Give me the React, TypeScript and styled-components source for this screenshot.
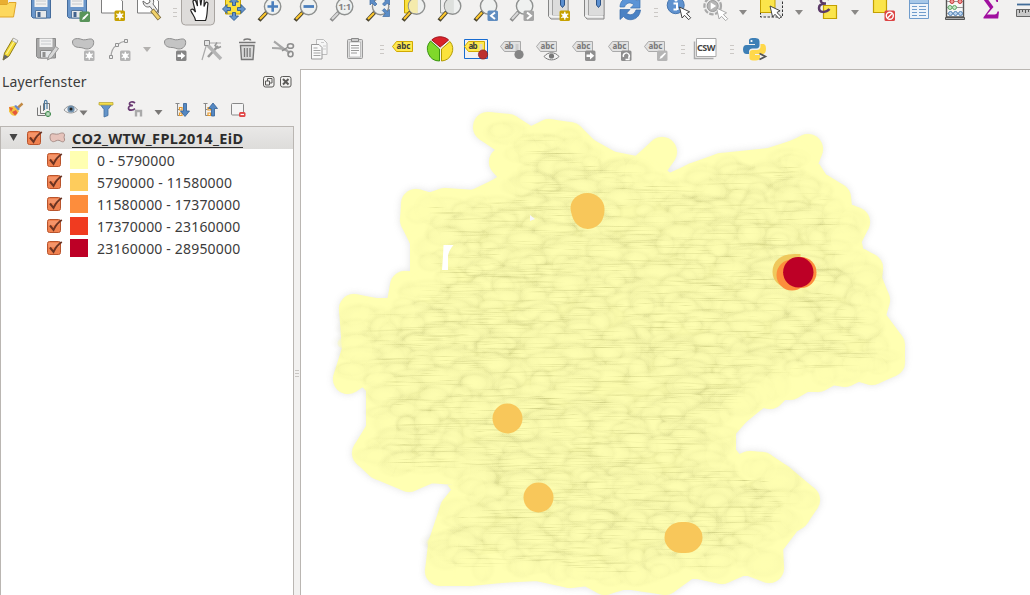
import React from "react";
import styled, { createGlobalStyle } from "styled-components";

const GlobalStyle = createGlobalStyle`
  html, body, #root { margin: 0; height: 100%; }
  body { background: #f2f1f0; overflow: hidden; font-family: "Noto Sans", "Open Sans", sans-serif; color: #3c3c3c; }
`;

const Window = styled.div`
  display: flex;
  flex-direction: column;
  width: 1030px;
  height: 595px;
  overflow: hidden;
  background: #f2f1f0;
`;

const Toolbar = styled.div<{ $height: number; $shift: number }>`
  display: flex;
  align-items: flex-end;
  flex: none;
  height: ${(p) => p.$height}px;
  margin-left: ${(p) => p.$shift}px;
  overflow: hidden;
`;

const ToolSvg = styled.svg`
  flex: none;
  width: 36px;
  height: 32px;
  display: block;
`;

const GripBox = styled.div`
  flex: none;
  width: 13px;
  height: 32px;
  display: flex;
  flex-direction: column;
  align-items: center;
  justify-content: center;
  gap: 3px;
`;

const GripDot = styled.span`
  width: 4px;
  height: 1px;
  margin-left: 3px;
  background: #cbc8c5;
`;

const ArrowBox = styled.div<{ $width: number }>`
  flex: none;
  width: ${(p) => p.$width}px;
  height: 32px;
  display: flex;
  align-items: center;
  justify-content: center;
`;

const Triangle = styled.span<{ $color: string }>`
  border: 4px solid transparent;
  border-top: 5px solid ${(p) => p.$color};
  border-bottom: 0;
`;

const Workspace = styled.div`
  display: flex;
  flex: 1;
  min-height: 0;
  margin-top: 4px;
`;

const Panel = styled.aside`
  width: 294px;
  display: flex;
  flex-direction: column;
`;

const PanelTitle = styled.header`
  display: flex;
  align-items: center;
  height: 25px;
  gap: 5px;
  padding: 0 2px;
  font-size: 14px;
  > span { flex: 1; letter-spacing: 0.15px; }
`;

const PanelTools = styled.div`
  display: flex;
  align-items: center;
  height: 32px;
  > svg { flex: none; display: block; }
`;

const Tree = styled.div`
  flex: 1;
  background: #fff;
  border: 1px solid #bab6b2;
  border-bottom: 0;
`;

const GroupRow = styled.div`
  display: flex;
  align-items: center;
  height: 22px;
  padding-left: 8px;
  background: linear-gradient(#e9e8e7, #dddcda);
  > svg { flex: none; }
`;

const GroupName = styled.span`
  margin: 2px 0 0 6px;
  font-size: 14.5px;
  line-height: 17px;
  font-weight: 700;
  letter-spacing: 0.37px;
  color: #2c2c2c;
  white-space: nowrap;
  border-bottom: 1px solid #2c2c2c;
`;

const ClassRow = styled.div`
  display: flex;
  align-items: center;
  height: 22px;
  padding-left: 45px;
  > svg { flex: none; }
`;

const Swatch = styled.span<{ $color: string }>`
  width: 18px;
  height: 18px;
  margin: 0 9px 0 7px;
  background: ${(p) => p.$color};
`;

const ClassLabel = styled.span`
  margin-top: 2px;
  font-size: 14px;
  line-height: 20px;
  letter-spacing: 0.18px;
  white-space: nowrap;
`;

const Splitter = styled.div`
  width: 6px;
  display: flex;
  flex-direction: column;
  align-items: center;
  justify-content: center;
  gap: 2px;
  padding-top: 82px;
  box-sizing: border-box;
  > i { width: 4px; height: 1px; background: #c9c6c3; }
`;

const MapFrame = styled.main`
  flex: 1;
  background: #fff;
  border-left: 1px solid #bab6b2;
  border-top: 1px solid #bab6b2;
  > svg { display: block; }
`;

type Kids = { children?: React.ReactNode };

const Tool = ({ children }: Kids) => <ToolSvg viewBox="0 0 36 32">{children}</ToolSvg>;

const Grip = () => (
  <GripBox>
    <GripDot />
    <GripDot />
    <GripDot />
  </GripBox>
);

const Drop = ({ width = 20, color = "#8a8886" }: { width?: number; color?: string }) => (
  <ArrowBox $width={width}>
    <Triangle $color={color} />
  </ArrowBox>
);

const Badge = ({ x, y, fill, children }: { x: number; y: number; fill: string } & Kids) => (
  <g transform={`translate(${x} ${y})`}>
    <rect x=".5" y=".5" width="10.5" height="10.5" rx="1.5" fill={fill} />
    {children}
  </g>
);

const Star = () => (
  <g stroke="#fff" strokeWidth="1.3">
    <path d="M5.8 1.8v8M2.3 3.8l7 4M9.3 3.8l-7 4" />
    <circle cx="5.8" cy="5.8" r="1.8" fill="#fff" />
  </g>
);

const ArrowRight = () => <path d="M2 4.6h3.5V2.2L9.8 5.8 5.5 9.4V7H2z" fill="#fff" />;

const Lens = ({ grey, y = 10.5, children }: { grey?: boolean; y?: number } & Kids) => (
  <g>
    <path d={`M7 24.5L15 ${y + 5.5}`} stroke={grey ? "#8d8d8d" : "#4b4632"} strokeWidth="4" />
    <path d={`M8 23L14 ${y + 6.5}`} stroke={grey ? "#d7d7d7" : "#ffc92e"} strokeWidth="2" />
    <circle cx="20.6" cy={y} r="8.2" fill="#eef1f0" fillOpacity=".85" stroke="#8f9190" strokeWidth="1.4" />
    {children}
  </g>
);

const Floppy = ({ grey, y = 0 }: { grey?: boolean; y?: number }) => (
  <g transform={`translate(0 ${y})`}>
    <path d="M8.5 2.5h19v19.5H10l-1.500-1.500z" fill={grey ? "#a8a8a8" : "#6b97cb"} stroke={grey ? "#8a8a8a" : "#456c9c"} />
    <path d="M11.500 2.500h13v8.500h-13z" fill="#f1f1f1" />
    <path d="M13 5h10M13 8h10" stroke="#c6c9cc" />
    <path d="M12.500 14.500h11V22h-11z" fill="#e6e8ea" stroke={grey ? "#8a8a8a" : "#56789f"} />
    <path d="M14.500 16h3v5h-3z" fill={grey ? "#8f8f8f" : "#41638f"} />
  </g>
);

const Cursor = ({ x, y, stroke = "#444" }: { x: number; y: number; stroke?: string }) => (
  <path
    transform={`translate(${x} ${y})`}
    d="M0 0l2.600 11 2.400-2.700 4.200 4.400 2-2-4.300-4.200 3.200-1.700z"
    fill="#fff"
    stroke={stroke}
  />
);

const Page = () => <path d="M6.500 0v17h21V5L22 0z" fill="#fff" stroke="#7d7d7d" />;

const Blob = ({ x = 0 }: { x?: number }) => (
  <path
    transform={`translate(${x} 0)`}
    d="M8.500 9c0-4 6-4 9.500-2.500C22 8 28 3.500 29.500 8c1 4-2 8-6.500 8-3 0-4-1.500-7-1.500-4 0-7.500-1.500-7.500-5.500z"
    fill="#c4c4c4"
    stroke="#8f8f8f"
  />
);

const Label = ({ grey, text = "abc", y = 0 }: { grey?: boolean; text?: string; y?: number }) => (
  <g transform={`translate(0 ${y})`}>
    <path d="M5.500 13.500l4-5H25.500v10H9.500z" fill={grey ? "#e2e2e2" : "#ffe94d"} stroke={grey ? "#a9a9a9" : "#d1a900"} />
    <text x="9.500" y="16.300" fontSize="8" fontWeight="700" fontFamily="Noto Sans, sans-serif" fill={grey ? "#777" : "#3a3a3a"} textLength={text === "abc" ? 14 : 9}>
      {text}
    </text>
  </g>
);

const Book = () => (
  <g>
    <path d="M8.500 0v20l2.500 3h17V2" fill="#e6e6e6" stroke="#858585" />
    <path d="M12.500 0v19.500H28V0" fill="#dcdcdc" stroke="#a0a0a0" />
    <path d="M9 20h18" stroke="#fff" />
    <path d="M20.500 0v9l2 2.500 2-2.500V0z" fill="#5b8fd0" stroke="#2d5386" />
  </g>
);

const MainTools = () => (
  <Toolbar $height={28} $shift={-13}>
    <Tool>
      <path d="M10 3h11v6H10z" fill="#e9ae32" />
      <path d="M9 8.500h11l2-2h7L26.500 21H9z" fill="#fdd85e" stroke="#dfa52a" />
    </Tool>
    <Tool><Floppy /></Tool>
    <Tool>
      <Floppy />
      <Badge x={20} y={15} fill="#59945a"><path d="M3 9l1-2.500 4.500-4 1 1L5.500 8z" fill="#fff" /></Badge>
    </Tool>
    <Tool><Page /><Badge x={19} y={14} fill="#c7a100"><Star /></Badge></Tool>
    <Tool>
      <Page />
      <path d="M12 5c0 5 4 7 7 5.500l5 7 3-2.500-5-7C24 4 21 1 18 1l1 5-3 2z" fill="#eee" stroke="#666" />
      <path d="M21 14l7.500 9" stroke="#7d6b39" strokeWidth="4.500" />
      <path d="M21.500 14.500l6.500 8" stroke="#f2d26b" strokeWidth="2.800" />
    </Tool>
    <Grip />
    <Tool>
      <rect x="1.500" y="-4" width="33" height="33" rx="4" fill="#dedcda" stroke="#a8a4a0" />
      <path
        d="M15.500 24.500c0-3-3-6-4.500-9.500-.8-2 1.700-2.500 3-.8l1.500 1.800L13 6c-.3-2 2.200-2.500 2.900-.5L17.500 10 17 3c0-2 2.700-2 3 0l.8 6.500.8-5.500c.4-1.700 2.700-1.300 2.600.5L24 10.500l1.500-3.500c.8-1.500 2.700-.8 2.400 1C27 14 27.500 20 25.500 24.500z"
        fill="#fff"
        stroke="#222"
        strokeWidth="1.200"
      />
    </Tool>
    <Tool>
      <path d="M9.500 2h15v16h-15z" fill="#fbe13c" stroke="#c4a000" />
      <g fill="#6595cc" stroke="#2f5c92" strokeWidth=".9">
        <path d="M18 24.500l-4.500-4.500h3v-3.500h3V20h3z" />
        <path d="M18 1.500L13.500 6h3v3.500h3V6h3z" />
        <path d="M6.500 13l4.500-4.500v3h3.500v3H11v3z" />
        <path d="M29.500 13L25 8.500v3h-3.500v3H25v3z" />
      </g>
    </Tool>
    <Tool><Lens><path d="M15.500 10.500h10.500M20.700 5.200v10.600" stroke="#4b7fbd" strokeWidth="2.600" /></Lens></Tool>
    <Tool><Lens><path d="M15.500 10.500h10.500" stroke="#4b7fbd" strokeWidth="2.800" /></Lens></Tool>
    <Tool>
      <Lens grey>
        <text x="14.200" y="14" fontSize="9.500" fontWeight="700" fill="#858585" textLength="13">1:1</text>
      </Lens>
    </Tool>
    <Tool>
      <Lens />
      <g fill="#5c8dc6" stroke="#3e6ca3" strokeWidth=".7">
        <path d="M29.500 20.500v-7l-2.200 2-3-3-2 2 3 3-2.500 3z" />
        <path d="M10 2v7l2-2 3 3 2-2-3-3 2-3z" />
        <path d="M29.500 2v7l-2-2-3 3-2-2 3-3-2-3z" />
      </g>
    </Tool>
    <Tool><path d="M8.500 0h13v17h-13z" fill="#fbe13c" stroke="#c4a000" /><Lens y={10} /><path d="M17 3.500a7.500 7.500 0 0 0 0 13.500h4.500v-14z" fill="#f5ebac" /></Tool>
    <Tool><path d="M8.500 0h13v17h-13z" fill="#eee" stroke="#929a97" /><Lens y={10} /><path d="M17 3.500a7.500 7.500 0 0 0 0 13.500h4.500v-14z" fill="#dde0dd" /></Tool>
    <Tool><Lens y={10} /><Badge x={19} y={14} fill="#608dc0"><path d="M8 2.500L4 5.800 8 9" stroke="#fff" strokeWidth="2" fill="none" /></Badge></Tool>
    <Tool><Lens y={10} grey /><Badge x={19} y={14} fill="#a5a5a5"><path d="M4 2.500l4 3.300L4 9" stroke="#fff" strokeWidth="2" fill="none" /></Badge></Tool>
    <Tool><Book /><Badge x={19} y={14} fill="#c7a100"><Star /></Badge></Tool>
    <Tool><Book /></Tool>
    <Tool>
      <path d="M8 11c0-10 12-12 17-6l3-2.500V12H18.500l3.300-3.300C18 5.500 14 7 12.500 11z" fill="#5c94d6" stroke="#3970b0" strokeWidth=".7" />
      <path d="M28.500 14c-1 10-12 12.500-17 6.500L8 23.500V13.500h10l-3.500 3.800c4 3 8 1 9.500-3.300z" fill="#4a82c4" stroke="#3569a8" strokeWidth=".7" />
    </Tool>
    <Grip />
    <Tool>
      <circle cx="14.700" cy="9.200" r="8.500" fill="#5f92cf" stroke="#4675ae" />
      <circle cx="15" cy="4" r="1.600" fill="#fff" />
      <path d="M12.500 7.500H16V13h1.500M12.500 13.500H16" stroke="#fff" strokeWidth="2" fill="none" />
      <Cursor x={18.500} y={11} />
    </Tool>
    <Tool>
      <circle cx="15.700" cy="10" r="8.300" fill="#ececec" stroke="#a9a9a9" strokeWidth="2.200" strokeDasharray="4.500 1.500" />
      <circle cx="15.700" cy="10" r="5.500" fill="#b5b5b5" stroke="#9a9a9a" />
      <path d="M13.700 6.500v7l5.500-3.500z" fill="#fff" />
      <Cursor x={19.500} y={12} stroke="#aaa" />
    </Tool>
    <Drop />
    <Tool>
      <path d="M7.500 0v21h22V0" fill="#e7e7e7" stroke="#333" strokeDasharray="2.500 1.500" />
      <path d="M7.500 0h14.500v16.500H7.500z" fill="#fbe54b" stroke="#c4a000" />
      <Cursor x={17} y={10} />
    </Tool>
    <Drop />
    <Tool>
      <path d="M14.500 9.500h13v13h-13z" fill="#fbe54b" stroke="#c4a000" strokeWidth="1.200" />
      <path d="M20 3.500c-4-3-9-1-8 2 .5 2 3 2 5 2-4 0-7 1-7 4.500C10 17 17 17 20.500 13" stroke="#5b3a68" strokeWidth="2.500" fill="none" />
    </Tool>
    <Drop />
    <Tool>
      <path d="M8.500 0h13v16.500h-13z" fill="#fbe54b" stroke="#c4a000" strokeWidth="1.200" />
      <Badge x={19} y={14} fill="#dc4444">
        <circle cx="5.800" cy="5.800" r="3.500" fill="none" stroke="#fff" strokeWidth="1.400" />
        <path d="M8 3.500L3.500 8" stroke="#fff" strokeWidth="1.400" />
      </Badge>
    </Tool>
    <Tool>
      <path d="M8.500 0h19v22.500h-19z" fill="#eef4fa" stroke="#6f9ccc" />
      <path d="M9 3h18v4H9z" fill="#a5c7e8" />
      <path d="M9 7.500h18" stroke="#6f9ccc" />
      <path d="M11 10.500h5m2 0h7M11 13.500h5m2 0h7M11 16.500h5m2 0h7M11 19.500h5m2 0h7" stroke="#6f9ccc" />
    </Tool>
    <Tool>
      <path d="M9.500 0v21h17V0" fill="#f7f7f7" stroke="#555" strokeWidth="1.400" />
      <path d="M10 5.500h16M10 11.500h16M10 17.500h16" stroke="#999" />
      <path d="M8.500 21.500h19v2h-19z" fill="#aaa" stroke="#555" />
      <g strokeWidth="1" stroke="#c63838" fill="#f09a9a"><circle cx="15" cy="5.500" r="2" /><circle cx="23" cy="5.500" r="2" /></g>
      <g strokeWidth="1" stroke="#5fa866" fill="#c5e6c8"><circle cx="13" cy="11.500" r="2" /><circle cx="17.500" cy="11.500" r="2" /></g>
      <g strokeWidth="1" stroke="#5585b8" fill="#bcd4ed"><circle cx="13.500" cy="17.500" r="2" /><circle cx="18.500" cy="17.500" r="2" /><circle cx="23.500" cy="17.500" r="2" /></g>
    </Tool>
    <Tool>
      <path d="M10.500 1H25v5h-1.500c-.5-2-1-2.500-3-2.500H15l5.500 7.500-6.500 7.500h7.500c2 0 2.500-1 3-3H26l-.8 7H10.500v-1.200L17 12.500l-6.500-9z" fill="#a0109f" />
    </Tool>
    <Tool>
      <path d="M8 8.500h22" stroke="#416c98" strokeWidth="1.800" />
      <path d="M7.500 13.500H36v7H7.500z" fill="#c8c8c8" stroke="#666" />
      <path d="M10.500 14v3M13.500 14v2M16.500 14v3M19.500 14v2" stroke="#555" />
    </Tool>
  </Toolbar>
);

const EditTools = () => (
  <Toolbar $height={37} $shift={-8}>
    <Tool>
      <path d="M11 27l1.500-7L21 5.500l4.500 2.700L17 23z" fill="#f2d935" stroke="#8f7d1e" />
      <path d="M14.500 21l8.500-14" stroke="#fff493" strokeWidth="1.300" />
      <path d="M20 7.500l1.500-2.500 4.500 2.600-1.500 2.600z" fill="#eee" stroke="#999" strokeWidth=".7" />
      <path d="M11 27.500l1.400-6 4 2.200z" fill="#666" />
    </Tool>
    <Tool><Floppy grey y={3} /><path d="M19.500 27l1.500-4.500 6.500-9 3 2-6.500 9z" fill="#d8d8d8" stroke="#999" /></Tool>
    <Tool><Blob /><Badge x={19.500} y={17} fill="#b4b4b4"><Star /></Badge></Tool>
    <Tool>
      <path d="M11 24c0-6 2-9.500 6-12 3-2.500 5-3.500 9-4" stroke="#a5a5a5" fill="none" strokeWidth="1.200" />
      <path d="M9.500 22.500h3v3h-3zM15.500 10.500h3v3h-3zM24.500 6.500h3v3h-3z" fill="#eee" stroke="#929292" />
      <Badge x={19.500} y={17} fill="#b4b4b4"><Star /></Badge>
    </Tool>
    <Drop width={22} color="#b3b1af" />
    <Tool><Blob x={-2} /><Badge x={17.500} y={17} fill="#858585"><ArrowRight /></Badge></Tool>
    <Tool>
      <path d="M13 10h14M13 10L8 27" stroke="#aaa" strokeWidth="1.200" />
      <path d="M10.500 7.500h5v5h-5z" fill="#e5e5e5" stroke="#8a8a8a" />
      <path d="M14 24l10-11" stroke="#999" strokeWidth="2.500" />
      <path d="M14 12.500l13 13.500" stroke="#b5b5b5" strokeWidth="3.500" />
      <path d="M23 9.500l-2 3 3 2.500 3-1.500" fill="none" stroke="#999" strokeWidth="1.500" />
    </Tool>
    <Tool>
      <path d="M10.500 12.500h13.500l-1 14H11.500z" fill="#d9d9d9" stroke="#777" strokeWidth="1.400" />
      <path d="M14.500 15v9M17.200 15v9M20 15v9" stroke="#777" strokeWidth="1.300" />
      <path d="M9 9.500h16.500M14 7.500c0-2 6.500-2 6.500 0" stroke="#777" strokeWidth="1.700" fill="none" />
    </Tool>
    <Tool>
      <path d="M6 15c7 0 13 0 18 5M8 8.500c5 3 9 8 13.500 9" fill="none" stroke="#a7a7a7" strokeWidth="2.200" />
      <ellipse cx="24.500" cy="13" rx="3" ry="2.300" fill="none" stroke="#8e8e8e" strokeWidth="1.600" />
      <ellipse cx="24.500" cy="21" rx="2.500" ry="2.800" fill="none" stroke="#8e8e8e" strokeWidth="1.600" />
      <path d="M16 18l6-4" stroke="#8e8e8e" strokeWidth="1.500" />
    </Tool>
    <Tool>
      <path d="M14.500 6.500h7l3.500 3.500v11.500H14.500z" fill="#f6f6f6" stroke="#bcbcbc" />
      <path d="M9.500 11.500h7.500l3 3v11.500H9.500z" fill="#fafafa" stroke="#999" />
      <path d="M11.500 15h4M11.500 17.500h7M11.500 20h7M11.500 22.500h7" stroke="#a5a5a5" />
      <path d="M19 9.500h3M21 13h3M21 16h3" stroke="#ccc" />
    </Tool>
    <Tool>
      <rect x="9.500" y="6.500" width="15" height="19" rx="1" fill="#ddd" stroke="#999" />
      <path d="M11.500 9h11v15h-11z" fill="#fafafa" stroke="#aaa" strokeWidth=".7" />
      <path d="M13.500 5.500h7v3h-7z" fill="#ccc" stroke="#888" />
      <path d="M13 12.500h8M13 15h8M13 17.500h8M13 20h6" stroke="#999" />
    </Tool>
    <Grip />
    <Tool><Label /></Tool>
    <Tool>
      <path d="M17 16V28a12 12 0 0 1-9-20z" fill="#80d82a" stroke="#3a9411" transform="translate(-.5 0)" />
      <path d="M18.500 16V28a12 12 0 0 0 8.500-19.500z" fill="#fbe33c" stroke="#b39b00" />
      <path d="M17.200 14L8.800 7c4-4.300 12.500-4.300 16.800 0z" fill="#d9222a" stroke="#a0131b" />
    </Tool>
    <Tool>
      <path d="M5.500 6.500h23v19h-23z" fill="#f2f1f0" stroke="#176bd0" />
      <Label text="ab" />
      <path d="M22 11v9" stroke="#e2d7c2" strokeWidth="3" />
      <circle cx="24" cy="21.500" r="4.600" fill="#bd2f2f" stroke="#831d1d" strokeWidth=".7" />
    </Tool>
    <Tool>
      <Label grey text="ab" />
      <path d="M22 11v9" stroke="#ccc" strokeWidth="3" />
      <circle cx="24" cy="21.500" r="4.600" fill="#858585" />
    </Tool>
    <Tool>
      <Label grey />
      <path d="M13 23.500c4-5 11-5 15 0-4 4.500-11 4.500-15 0z" fill="#f4f4f4" stroke="#777" />
      <circle cx="20.500" cy="23" r="2.600" fill="#777" />
    </Tool>
    <Tool><Label grey /><Badge x={17.500} y={17} fill="#8e8e8e"><ArrowRight /></Badge></Tool>
    <Tool>
      <Label grey />
      <Badge x={17.500} y={17} fill="#8e8e8e"><path d="M3 7a3 3 0 1 1 5 1M5 9.500h3.500V6" stroke="#fff" strokeWidth="1.400" fill="none" /></Badge>
    </Tool>
    <Tool><Label grey /><Badge x={17.500} y={17} fill="#b5b5b5"><path d="M3 9l1-2.500 4.500-4 1 1L5.500 8z" fill="#fff" /></Badge></Tool>
    <Grip />
    <Tool>
      <path d="M6.500 8.500v17h19" fill="none" stroke="#aaa" strokeWidth="1.500" />
      <path d="M8.500 5.500h19.500v18H8.500z" fill="#fff" stroke="#aaa" />
      <text x="9" y="18" fontSize="9" fontWeight="700" fill="#444" fontFamily="Noto Sans, sans-serif" textLength="18.500">CSW</text>
    </Tool>
    <Grip />
    <Tool>
      <path d="M17 5c-5 0-5 1.500-5 3.500v2.500h6v1H9.500C7 12 6 14 6 16.500c0 3 1.500 4.500 3.500 4.500H12v-2.500c0-2 1.500-3 3.500-3h4c2 0 3-1.500 3-3V8.500C22.500 6 21 5 17 5z" fill="#3d7fb6" />
      <circle cx="14.500" cy="8" r="1.100" fill="#fff" />
      <path d="M17.500 27.500c-5 0-5-1.500-5-3.500v-4c0-2 1.500-3 3-3h4.500c2 0 3.500-1.500 3.500-3.500V11H26c2.500 0 3 2.500 3 5s-1 5-3 5h-8v1h5v2.500c0 2-1 3-5.500 3z" fill="#ffd84a" />
      <path d="M22.500 20.500l6 3-6 3" fill="none" stroke="#555" strokeWidth="1.600" />
    </Tool>
  </Toolbar>
);

const CheckBox = () => (
  <svg width="17" height="16" viewBox="0 0 17 16">
    <rect x="1.500" y="1.500" width="13" height="13" rx="2" fill="#f0814f" stroke="#b9542c" />
    <path d="M2.500 3h11v4h-11z" fill="#f7a27b" opacity=".6" />
    <path d="M4 7.500l3.500 4.300C9.500 7.500 12 4.500 15.800 2" fill="none" stroke="#6b3322" strokeWidth="2" />
  </svg>
);

const SmallTools = () => (
  <PanelTools>
    <svg width="294" height="32" viewBox="0 1 294 32">
      <path d="M22.500 10.500l-5.500 5" stroke="#c28a45" strokeWidth="2.400" />
      <path d="M9 14l5-1 5 5-3 4.500c-3 1-5-.5-7-4z" fill="#f3c340" />
      <path d="M9 14l4 1-2 4zM12 19l4-2 1.500 3-2.500 2.500z" fill="#e4573d" />
      <path d="M14 13l2-1 4 4-2 1.500z" fill="#6a88c8" />
      <g fill="none" stroke="#777">
        <path d="M37.500 14.500v8h8M40.500 12.500v8h6M43.500 10.500h6v7" />
        <path d="M43.500 18v-7.500" />
      </g>
      <path d="M44.500 17V9c0-2.500 2.500-2 2.500 0v7" stroke="#48779f" strokeWidth="1.200" fill="none" />
      <path d="M48 18v6M45 21h6" stroke="#4d9159" strokeWidth="3" />
      <path d="M48 19v4M46 21h4" stroke="#def0df" />
      <path d="M64 17c3.500-5.500 10-5.500 13.500 0-3.500 4-10 4-13.500 0z" fill="#eef1f4" stroke="#9a9a9a" />
      <circle cx="71" cy="16" r="3.600" fill="#6f8fac" />
      <circle cx="71" cy="16" r="1.500" fill="#222" />
      <path d="M79.500 17.500h8l-4 5z" fill="#7a7876" />
      <path d="M99.500 10.500h13l-4.500 6v6l-4 1.500v-7.500z" fill="#6494c9" stroke="#426f9f" strokeWidth=".8" />
      <path d="M99 9.500h14v2.500H99z" fill="#f4df4c" stroke="#b5a232" strokeWidth=".7" />
      <path d="M135 10c-2.500-2-6-1-5.500 1 .3 1.500 2 1.500 3.500 1.500-3 0-4.500.8-4.500 2.700 0 2.600 4.500 2.600 6.500.5" fill="none" stroke="#6b3c73" strokeWidth="1.700" />
      <path d="M136 23.500v-5.500h5v5.500" fill="none" stroke="#aaa" strokeWidth="2.400" />
      <path d="M154.500 17h8l-4 5z" fill="#7a7876" />
      <path d="M175.500 10.500h4M177.500 10.500v12h3M177.500 16.500h2" stroke="#888" fill="none" />
      <path d="M203.500 10.500h4M205.500 10.500v12h3M205.500 16.500h2" stroke="#888" fill="none" />
      <g fill="#fff" stroke="#e69a2d" strokeWidth="1.200">
        <path d="M179.500 14.500h2.500v2.500h-2.500zM179.500 20h2.500v2.500h-2.500zM208 14.500h2.500v2.500H208zM208 20h2.500v2.500H208z" />
      </g>
      <path d="M183.500 10.500h3V18h3l-4.500 5.500-4.500-5.500h3z" fill="#5588c2" stroke="#335f94" strokeWidth=".8" />
      <path d="M211.500 23h3v-7.500h3L213 10l-4.500 5.500h3z" fill="#5588c2" stroke="#335f94" strokeWidth=".8" />
      <rect x="231.500" y="10.500" width="12" height="11.500" rx="1" fill="#f5f5f5" stroke="#888" />
      <rect x="239" y="19" width="6.500" height="5" rx="1.500" fill="#e14646" />
      <path d="M240.500 21.500h3.500" stroke="#fff" strokeWidth="1.200" />
    </svg>
  </PanelTools>
);

const classes = [
  { color: "#ffffb2", label: "0 - 5790000" },
  { color: "#fecc5c", label: "5790000 - 11580000" },
  { color: "#fd8d3c", label: "11580000 - 17370000" },
  { color: "#f03b20", label: "17370000 - 23160000" },
  { color: "#bd0026", label: "23160000 - 28950000" },
];

type Point = [number, number];

/* Centres of the buffer circles along the rim of the covered area. */
const rim: Point[] = [
  [488, 127], [508, 129], [530, 143], [549, 134], [570, 137], [585, 152], [610, 166], [640, 172], [662, 152], [647, 174],
  [668, 190], [694, 178], [722, 168], [770, 163], [795, 155], [808, 149], [802, 165], [815, 185], [836, 198], [838, 215],
  [855, 222], [846, 240], [850, 258], [868, 268], [867, 280], [875, 300], [870, 318], [890, 345], [890, 362], [872, 370],
  [858, 366], [845, 372], [831, 370], [818, 377], [804, 377], [790, 385], [779, 385], [770, 394], [760, 392], [752, 398],
  [735, 412], [721, 428], [721, 455], [735, 472], [750, 466],
  [762, 467], [780, 479], [805, 500], [795, 515], [787, 520], [768, 545], [769, 568], [745, 559], [722, 569], [690, 562],
  [665, 580], [645, 577], [625, 574], [605, 580], [588, 571], [570, 573], [538, 566], [500, 568], [470, 571], [440, 571], [443, 545], [455, 509], [470, 490],
  [455, 470], [430, 468], [409, 477], [380, 465], [367, 453], [381, 430], [381, 385], [365, 368], [348, 379], [357, 350], [354, 309], [375, 313],
  [400, 313], [405, 286], [425, 285], [425, 240], [415, 220], [416, 204], [430, 208], [445, 203], [475, 205], [500, 193], [520, 180],
  [504, 162], [522, 150],
];

const random = (() => {
  let seed = 20147;
  return () => {
    seed = (seed * 16807) % 2147483647;
    return seed / 2147483647;
  };
})();

const inside = (x: number, y: number) => {
  let hit = false;
  for (let i = 0, j = rim.length - 1; i < rim.length; j = i++) {
    const [xi, yi] = rim[i];
    const [xj, yj] = rim[j];
    if (yi > y !== yj > y && x < ((xj - xi) * (y - yi)) / (yj - yi) + xi) hit = !hit;
  }
  return hit;
};

const scatter = (count: number): Point[] => {
  const out: Point[] = [];
  while (out.length < count) {
    const x = 340 + random() * 560;
    const y = 120 + random() * 465;
    if (inside(x, y)) out.push([x, y]);
  }
  return out;
};

/* Overlapping buffers, mostly drawn from north to south so the crests stay visible. */
const mounds = scatter(1400)
  .map(([x, y]) => ({ x, y, w: 0.55 + random() * 0.8, h: 0.35 + random() * 0.45, z: y + random() * 26 }))
  .sort((a, b) => a.z - b.z);
const streaks = scatter(1200)
  .map(([x, y]) => ({ x, y: Math.round(y), w: 12 + random() * 48, o: 0.04 + random() * 0.12 }))
  .filter((s) => inside(s.x + s.w, s.y));
const rimPath = "M" + rim.map((p) => p.join(" ")).join("L") + "Z";

const MapDrawing = () => (
  <svg width="729" height="525" viewBox="301 70 729 525">
    <defs>
      <radialGradient id="shade">
        <stop offset=".6" stopColor="#8a8a48" stopOpacity=".07" />
        <stop offset="1" stopColor="#8a8a48" stopOpacity="0" />
      </radialGradient>
      <radialGradient id="crest">
        <stop offset=".3" stopColor="#ffffb2" stopOpacity=".85" />
        <stop offset=".8" stopColor="#fefeb1" stopOpacity=".65" />
        <stop offset="1" stopColor="#fdfdb0" stopOpacity=".35" />
      </radialGradient>
      <linearGradient id="fade">
        <stop offset="0" stopColor="#7d7d30" stopOpacity="0" />
        <stop offset=".5" stopColor="#7d7d30" />
        <stop offset="1" stopColor="#7d7d30" stopOpacity="0" />
      </linearGradient>
      <filter id="halo" x="-5%" y="-5%" width="110%" height="110%">
        <feGaussianBlur stdDeviation="3.5" />
      </filter>
      <g id="mound">
        <circle r="21" fill="url(#shade)" />
        <circle cy="1" r="15" fill="url(#crest)" />
      </g>
    </defs>
    <path d={rimPath} fill="#888" stroke="#888" strokeWidth="31" strokeLinejoin="round" opacity=".2" filter="url(#halo)" />
    <path d={rimPath} fill="#fbfbac" stroke="#ffffb2" strokeWidth="30" strokeLinejoin="round" />
    {mounds.map((m, i) => (
      <use key={i} href="#mound" transform={`translate(${m.x.toFixed(1)} ${m.y.toFixed(1)}) scale(${m.w.toFixed(2)} ${m.h.toFixed(2)})`} />
    ))}
    {rim.map(([x, y], i) => (
      <circle key={i} cx={x} cy={y} r="15.300" fill="#ffffb2" fillOpacity=".35" />
    ))}
    {streaks.map((s, i) => (
      <rect key={i} x={s.x.toFixed(1)} y={s.y} width={s.w.toFixed(1)} height="1" fill="url(#fade)" opacity={s.o.toFixed(2)} />
    ))}
    <path d="M443.500 245h10q-5 6-5.500 11v14h-6q1-12 1.500-25z" fill="#fff" />
    <path d="M530 215l5 4-5 2z" fill="#f6f6fb" />
    <g fill="#f8c75a">
      <path d="M570.500 208c0-8 7-15 17-15 9 0 17 7 17 16 0 8-3 19-17 20-12-1-16-11-17-21z" />
      <circle cx="507.500" cy="418.500" r="15" />
      <circle cx="538.500" cy="497.500" r="15" />
      <rect x="664.500" y="522" width="38" height="31" rx="17" ry="15.500" />
    </g>
    <path d="M772.500 272c0-11 8-18 22-18h6v34h-12c-9-1-16-7-16-16z" fill="#efc85c" />
    <circle cx="792" cy="275" r="15.500" fill="#fd8d3c" />
    <circle cx="801" cy="272.500" r="15.500" fill="#fd8d3c" />
    <circle cx="798.300" cy="272.300" r="15.200" fill="#bd0026" />
  </svg>
);

export default function App() {
  return (
    <Window>
      <GlobalStyle />
      <MainTools />
      <EditTools />
      <Workspace>
        <Panel>
          <PanelTitle>
            <span>Layerfenster</span>
            <svg width="12" height="12" viewBox="0 0 12 12" fill="none" stroke="#5b5a58">
              <rect x=".5" y=".5" width="10.500" height="10.500" rx="2" />
              <path d="M4.500 5V2.500h4.500v4.500H7M2.500 5h4v4h-4z" />
            </svg>
            <svg width="12" height="12" viewBox="0 0 12 12" fill="none" stroke="#5b5a58">
              <rect x=".5" y=".5" width="10.500" height="10.500" rx="2" />
              <path d="M3 3l5.500 5.500M8.500 3L3 8.500" strokeWidth="2" />
            </svg>
          </PanelTitle>
          <SmallTools />
          <Tree>
            <GroupRow>
              <svg width="9" height="8" viewBox="0 0 9 8"><path d="M.5 0h8L4.500 7z" fill="#454545" /></svg>
              <svg width="8" height="8" />
              <CheckBox />
              <svg width="23" height="14" viewBox="0 0 23 14">
                <path d="M7.500 3.500c2-2 5 .5 8-.5 3-1.500 6-1.500 6 1 0 1.500-1 2 0 4 .5 3-2 3.500-4 2-2-1.500-4-.5-6 .5-3 1-5.500-2-4-7z" fill="#e6c3bb" stroke="#a88e88" />
              </svg>
              <GroupName>CO2_WTW_FPL2014_EiD</GroupName>
            </GroupRow>
            {classes.map((c) => (
              <ClassRow key={c.label}>
                <CheckBox />
                <Swatch $color={c.color} />
                <ClassLabel>{c.label}</ClassLabel>
              </ClassRow>
            ))}
          </Tree>
        </Panel>
        <Splitter><i /><i /><i /></Splitter>
        <MapFrame><MapDrawing /></MapFrame>
      </Workspace>
    </Window>
  );
}
